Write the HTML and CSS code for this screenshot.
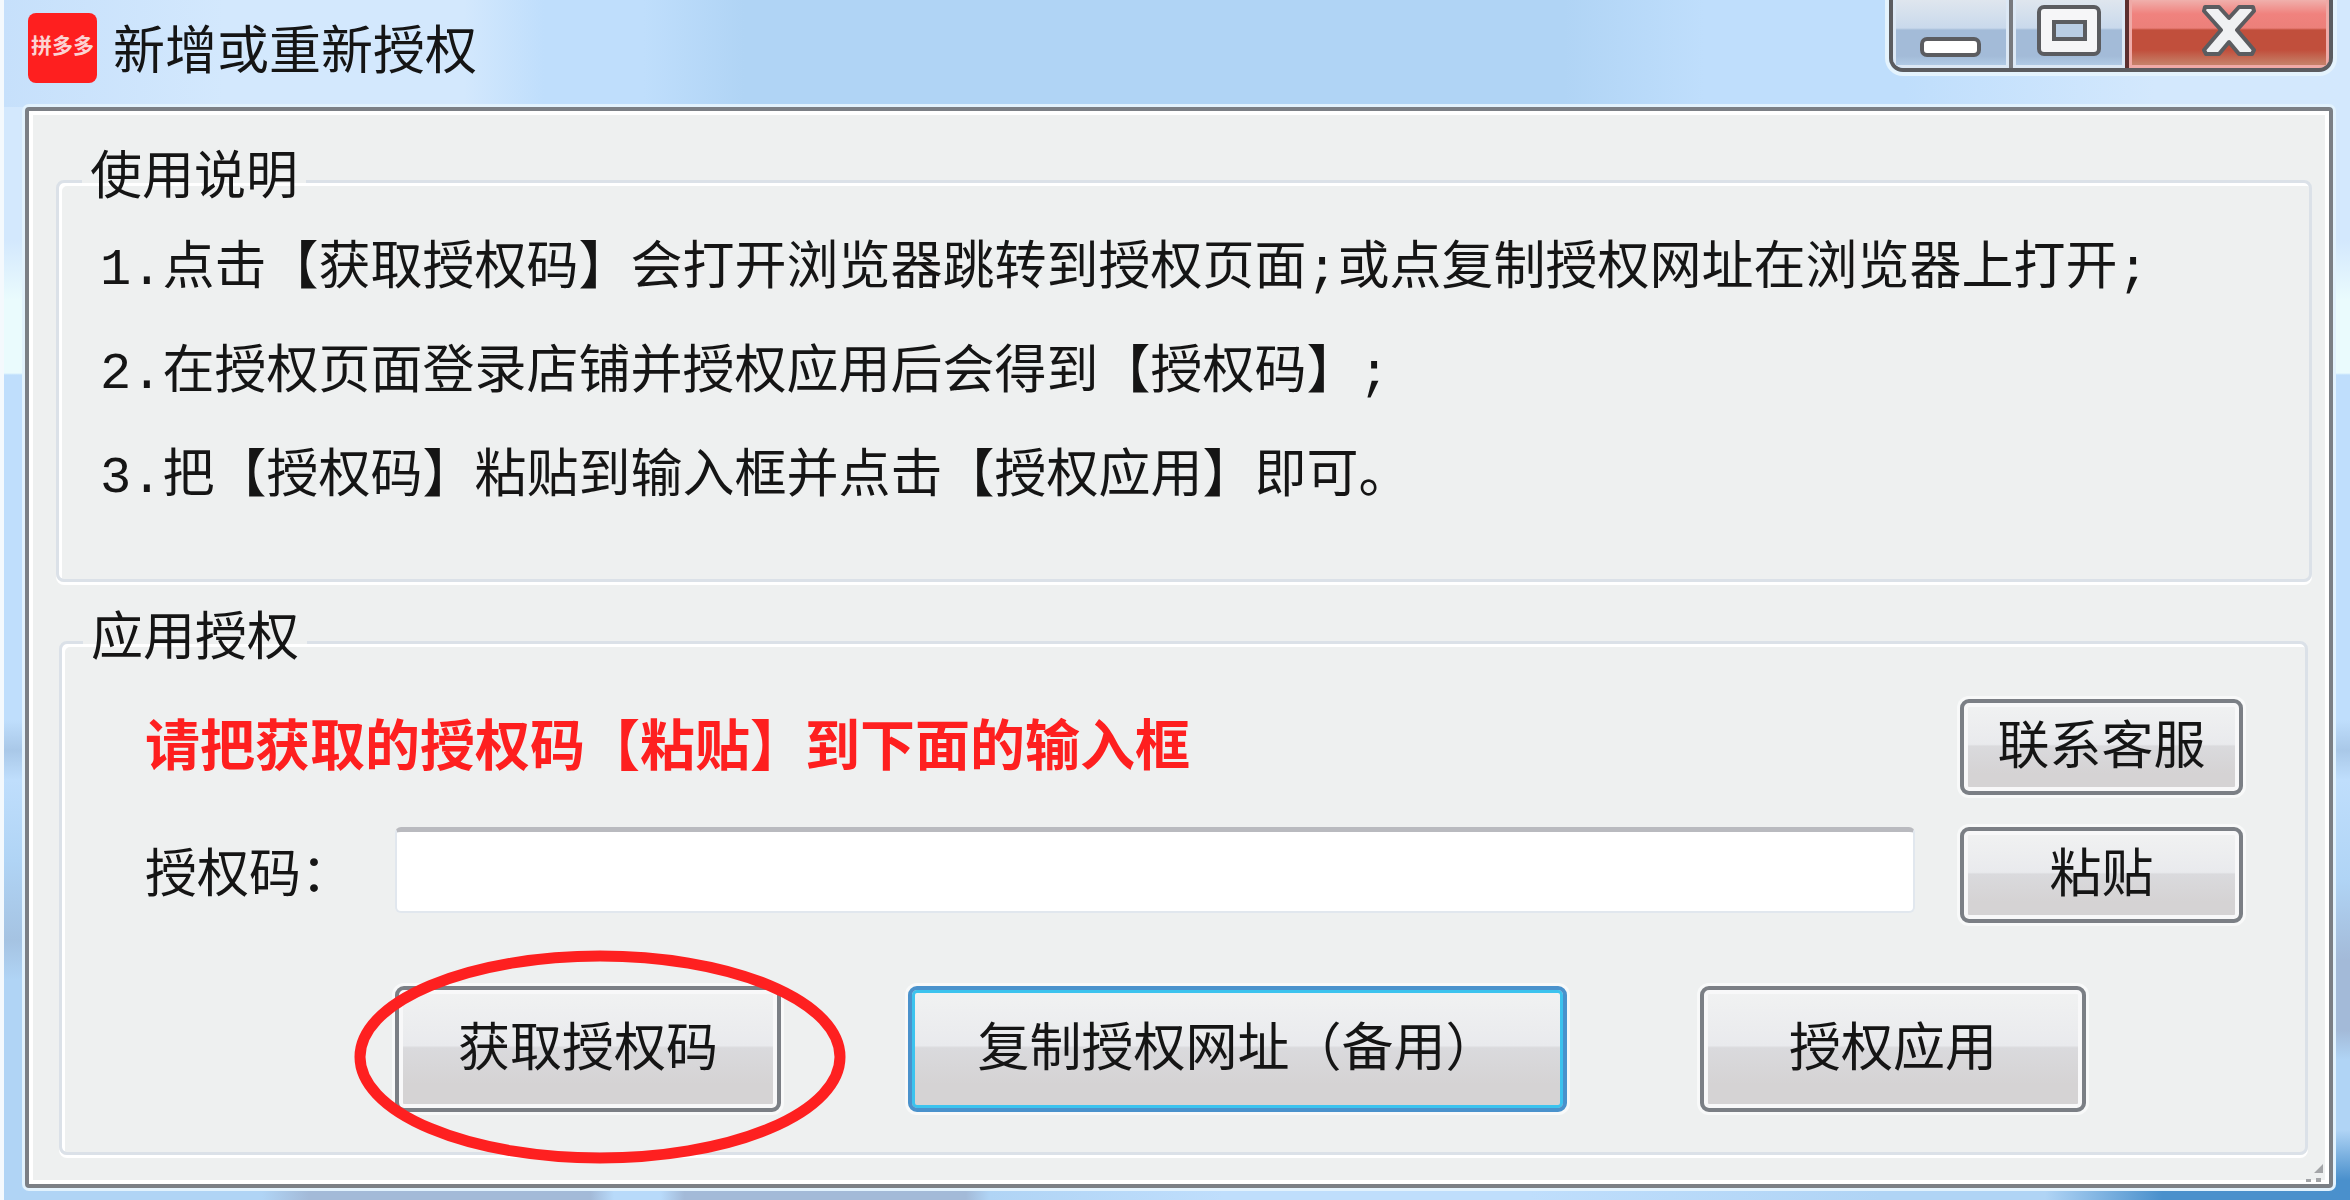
FILE: index.html
```html
<!DOCTYPE html>
<html lang="zh-CN">
<head>
  <meta charset="UTF-8" />
  <meta name="viewport" content="width=device-width, initial-scale=1.0" />
  <title>新增或重新授权</title>
  <link rel="stylesheet" href="styles.css">
</head>
<body>
  <div class="window">
    <header class="title-bar">
      <span class="app-icon">拼多多</span>
      <h1 class="title">新增或重新授权</h1>
      <div class="window-buttons">
        <button type="button" class="win-btn win-min" aria-label="最小化">
          <svg width="62" height="56" viewBox="0 0 62 56">
            <rect x="2" y="36" width="57" height="16" rx="5" fill="#fff" stroke="#5b5c60" stroke-width="4"/>
          </svg>
        </button>
        <button type="button" class="win-btn win-max" aria-label="最大化">
          <svg width="64" height="52" viewBox="0 0 64 52">
            <rect x="2" y="2" width="60" height="47" rx="5" fill="#f6f6f8" stroke="#5b5c60" stroke-width="4"/>
            <rect x="17" y="17" width="31" height="17" fill="#b9cde4" stroke="#5b5c60" stroke-width="4"/>
          </svg>
        </button>
        <button type="button" class="win-btn win-close" aria-label="关闭">
          <svg width="54" height="52" viewBox="0 0 54 52">
            <path d="M3 2H17L27 13L37 2H51L52 6L35 25L52 45L50 49H37L27 37L17 49H4L2 45L19 25L2 6Z" fill="#f0f1f3" stroke="#5b5c60" stroke-width="4" stroke-linejoin="round"/>
          </svg>
        </button>
      </div>
    </header>

    <main class="client">
      <fieldset class="group group-help">
        <legend>使用说明</legend>
        <p>1.点击【获取授权码】会打开浏览器跳转到授权页面;或点复制授权网址在浏览器上打开;</p>
        <p>2.在授权页面登录店铺并授权应用后会得到【授权码】;</p>
        <p>3.把【授权码】粘贴到输入框并点击【授权应用】即可。</p>
      </fieldset>

      <fieldset class="group group-auth">
        <legend>应用授权</legend>
        <form class="auth-form">
          <div class="row">
            <strong class="hint">请把获取的授权码【粘贴】到下面的输入框</strong>
            <button type="button" class="btn btn-side">联系客服</button>
          </div>
          <div class="row">
            <label for="code">授权码：</label>
            <input type="text" id="code" name="code" />
            <button type="button" class="btn btn-side">粘贴</button>
          </div>
          <div class="actions">
            <div class="marked">
              <button type="button" class="btn btn-main">获取授权码</button>
              <svg class="mark" width="492" height="216" viewBox="0 0 492 216">
                <ellipse cx="246" cy="108" rx="240" ry="101" fill="none" stroke="#fe2020" stroke-width="11"/>
              </svg>
            </div>
            <button type="button" class="btn btn-main btn-copy">复制授权网址（备用）</button>
            <button type="submit" class="btn btn-main btn-apply">授权应用</button>
          </div>
        </form>
      </fieldset>

      <svg class="grip" width="20" height="20" viewBox="0 0 20 20">
        <path d="M18 1v9h-9z M11 15h5v4h-5z M1 16h5v3h-5z" fill="#a3a5a8"/>
      </svg>
    </main>
  </div>
</body>
</html>
```

FILE: styles.css
```css
* {
  box-sizing: border-box;
}

body {
  margin: 0;
  font-family: "Liberation Mono", "Noto Sans CJK SC", monospace;
  font-size: 52px;
  line-height: 104px;
  color: #151515;
}

button, input {
  font: inherit;
  color: inherit;
}

/* aero glass: bottom edge, right edge, then the rest */
.window {
  display: flex;
  flex-direction: column;
  min-height: 100vh;
  padding: 0 17px 12px 21px;
  border-left: 4px solid #f4f9fd;
  background:
    linear-gradient(90deg, #b0d4f5 0, #b0d4f5 11%, #a3bad8 13%, #a3bad8 25%, #b8dafa 26%, #b8dafa 28%, #a3bad8 29%, #a3bad8 41%, #b0d4f5 42%, #bfdefc 52%, #bfdefc 65%, #b0d4f5 80%, #b0d4f5 87%, #4a90cc 92%, #4a90cc) left bottom / 100% 12px no-repeat,
    linear-gradient(#d3e8fd 0, #d3e8fd 240px, #eafbfd 300px, #eafbfd 373px, #bfdefc 375px, #bfdefc 720px, #a9c8e8 750px, #bfdefc 780px, #b0d4f5 880px, #a3bad8 960px, #a3bad8 1030px, #b0d4f5 1060px, #b0d4f5 1130px, #4a90cc 1180px) right top / 17px 100% no-repeat,
    linear-gradient(#d3e8fd 0, #d3e8fd 240px, #eafbfd 300px, #eafbfd 373px, #bfdefc 375px, #bfdefc 720px, #a9c8e8 750px, #bfdefc 780px, #b0d4f5 860px, #a5c3e2 940px, #b0d4f5 980px);
}

.title-bar {
  display: flex;
  align-items: flex-start;
  height: 107px;
  margin: 0 -17px 0 -21px;
  padding: 0 17px 0 24px;
  background: linear-gradient(90deg, #c6e0fb 0, #d3e8fd 220px, #d3e8fd 460px, #bfdefc 540px, #bfdefc 640px, #b0d4f5 740px, #b0d4f5 1560px, #bfdefc 1700px, #bfdefc 1900px, #d3e8fd 2150px);
}

.app-icon {
  width: 69px;
  height: 70px;
  margin-top: 13px;
  border-radius: 8px;
  background: #fe1f1f;
  color: #fbd3d3;
  font-size: 21px;
  font-weight: bold;
  line-height: 70px;
  text-align: center;
}

.title {
  flex: 1;
  margin: 0 0 0 16px;
  font-size: 52px;
  font-weight: normal;
  line-height: 112px;
}

.window-buttons {
  display: flex;
  width: 444px;
  height: 72px;
  border: 4px solid #5b5c60;
  border-top: 0;
  border-radius: 0 0 14px 14px;
  box-shadow: 0 0 0 4px #e4f3fd;
  overflow: hidden;
}

.win-btn {
  flex: none;
  width: 112px;
  height: 68px;
  padding: 0 0 6px;
  border: 0;
  box-shadow: inset 3px -3px 0 #dce8f5, inset -3px 0 0 #dce8f5;
  background: linear-gradient(#dfe6ee 0, #c9d9ec 28px, #a3bbd8 30px, #a3bbd8 56px, #b5cfea);
  line-height: 0;
}

.win-min {
  width: 120px;
  border-right: 4px solid #77797e;
}

.win-close {
  flex: 1;
  border-left: 4px solid #5c2f2f;
  box-shadow: inset 3px -3px 0 #efaaa7, inset -3px 0 0 #efaaa7;
  background: linear-gradient(#f0b0ac 0, #f0827e 14px, #ec807a 28px, #c14f3c 30px, #c14f3c 50px, #c58068 64px);
}

.client {
  position: relative;
  flex: 1;
  padding: 39px 17px 20px 27px;
  border: 4px solid #7b7f85;
  border-radius: 4px;
  background: #eef0f0;
  box-shadow: 0 0 0 3px #e2f2fd, inset 0 0 0 4px #fff;
}

.group {
  min-width: 0;
  margin: 0;
  border: 3px solid #dbe1e8;
  border-radius: 8px;
  box-shadow: 0 3px 0 #fff, inset 3px 3px 0 #fff;
}

.group legend {
  padding: 0 8px;
  line-height: 62px;
}

.group p {
  margin: 0;
}

.group-help {
  padding: 7px 0 48px 41px;
}

.group-help legend {
  margin-left: -18px;
}

.group-auth {
  margin: 29px 4px 0 3px;
  padding: 26px 62px 40px 83px;
}

.group-auth legend {
  margin-left: -62px;
}

.auth-form {
  margin: 0;
}

.row {
  display: flex;
  align-items: flex-start;
  justify-content: space-between;
  height: 96px;
  margin-bottom: 32px;
}

.hint {
  color: #fe1f1f;
  font-size: 55px;
}

.row label {
  width: 250px;
}

.row input {
  flex: 1;
  height: 86px;
  margin-right: 45px;
  padding: 0 12px;
  border: 2px solid #e1e7ee;
  border-top: 5px solid #b9babf;
  border-radius: 6px;
  background: #fff;
  outline: 0;
}

.btn {
  padding: 8px 0 0;
  border: 4px solid #7b7f85;
  border-radius: 9px;
  background: linear-gradient(#f1f2f2 0, #e9eaed 47%, #dadadd 49%, #d5d3d4 80%, #d5d3d4);
  box-shadow: inset 0 0 0 4px #f8f8f9, 0 0 0 3px #f8f9f9;
  line-height: 80px;
}

.btn-side {
  width: 283px;
  height: 96px;
}

.actions {
  display: flex;
  gap: 127px;
  padding: 31px 157px 0 250px;
}

.btn-main {
  width: 386px;
  height: 126px;
}

.btn-copy {
  width: 659px;
  border-color: #4a92cc;
  box-shadow: inset 0 0 0 3px #3cc3ee, 0 0 0 3px #f8f9f9;
}

.btn-apply {
  margin-left: auto;
}

/* red ring round the first button */
.marked {
  position: relative;
  height: 126px;
}

.mark {
  position: absolute;
  top: -37px;
  left: -41px;
  pointer-events: none;
}

.grip {
  position: absolute;
  right: 4px;
  bottom: 1px;
}
```
